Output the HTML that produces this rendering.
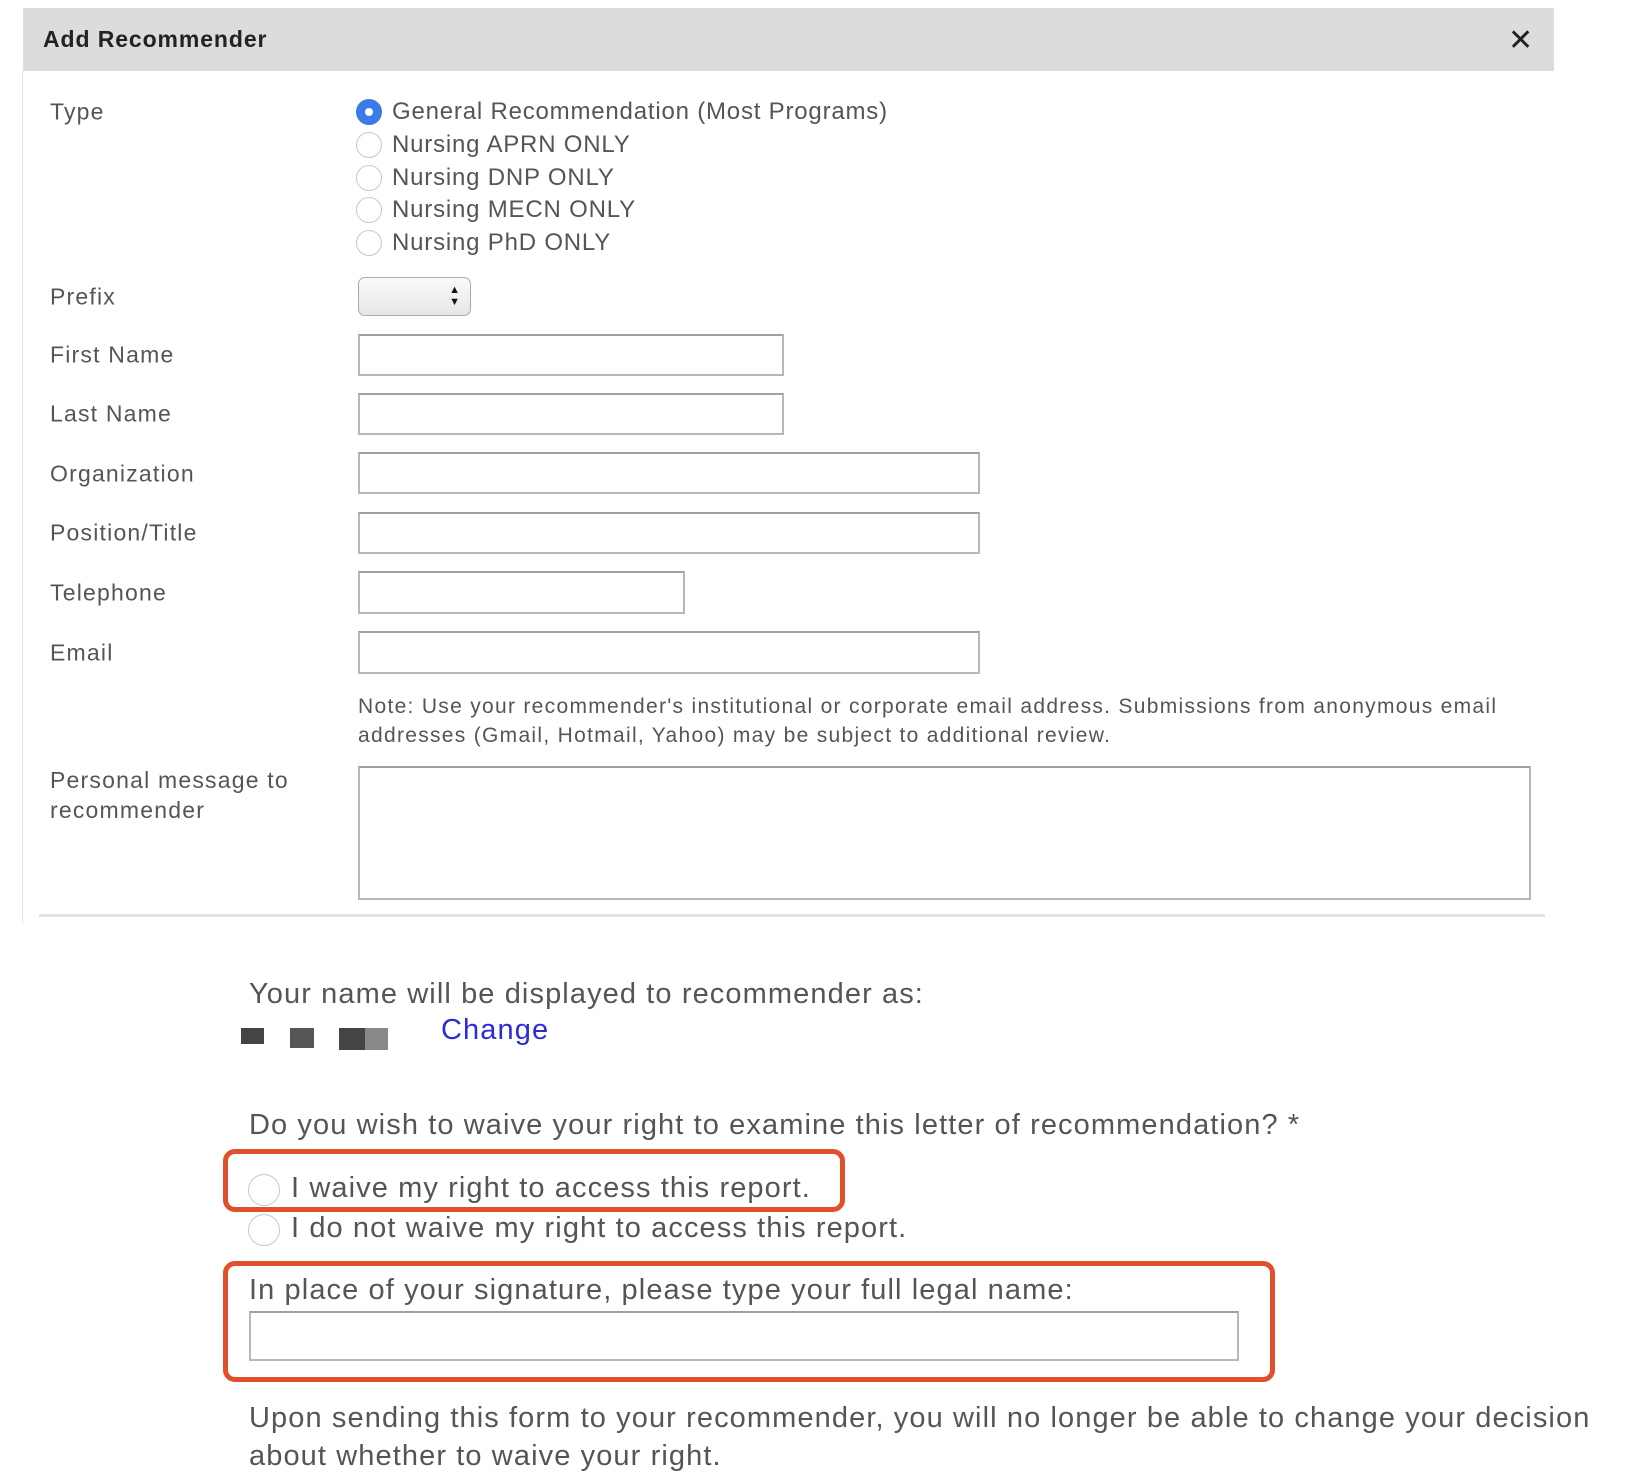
<!DOCTYPE html>
<html><head><meta charset="utf-8"><style>
body{margin:0;width:1648px;height:1482px;background:#fff;position:relative;overflow:hidden;font-family:"Liberation Sans",sans-serif;color:#555}
.a{position:absolute;white-space:nowrap}
.hdr{position:absolute;left:23px;top:8px;width:1531px;height:63px;background:#dcdcdc}
.lbl{position:absolute;left:50px;font-size:23px;letter-spacing:1.2px;transform:translateY(-50%)}
.rad{position:absolute;width:24px;height:24px;border:1px solid #c8c8c8;border-radius:50%;background:#fff;transform:translate(-50%,-50%)}
.rt{position:absolute;left:392px;font-size:24px;letter-spacing:0.8px;transform:translateY(-50%)}
.in{position:absolute;border:2px solid #b8b8b8;border-top-color:#a0a0a0;background:#fff;box-sizing:border-box}
.big{font-size:29px;letter-spacing:1.1px}
.box{position:absolute;border:5px solid #e0502a;border-radius:12px;box-sizing:border-box}
</style></head><body>
<div class="hdr"></div>
<div class="a" style="left:43px;top:26px;font-size:23px;font-weight:bold;color:#222;letter-spacing:0.9px">Add Recommender</div>
<div class="a" style="left:1508px;top:23px;font-size:30px;color:#222">✕</div>
<div class="a" style="left:22px;top:71px;width:1px;height:853px;background:#e4e4f0"></div>

<div class="lbl" style="top:112px">Type</div>
<div class="rad" style="left:369px;top:112px;background:#3a7be8;border-color:#3a7be8"><div style="position:absolute;left:8px;top:8px;width:8px;height:8px;border-radius:50%;background:#fff"></div></div>
<div class="rt" style="top:112px">General Recommendation (Most Programs)</div>
<div class="rad" style="left:369px;top:145px"></div><div class="rt" style="top:145px">Nursing APRN ONLY</div>
<div class="rad" style="left:369px;top:178px"></div><div class="rt" style="top:178px">Nursing DNP ONLY</div>
<div class="rad" style="left:369px;top:210px"></div><div class="rt" style="top:210px">Nursing MECN ONLY</div>
<div class="rad" style="left:369px;top:243px"></div><div class="rt" style="top:243px">Nursing PhD ONLY</div>

<div class="lbl" style="top:297px">Prefix</div>
<div class="a" style="left:358px;top:277px;width:113px;height:39px;border:1px solid #aaa;border-radius:7px;box-sizing:border-box;background:linear-gradient(#fafafa,#e6e6e6)"><div style="position:absolute;right:10px;top:6px;font-size:11px;line-height:12px;color:#111">▲<br>▼</div></div>
<div class="lbl" style="top:355px">First Name</div><div class="in" style="left:358px;top:334px;width:426px;height:42px"></div>
<div class="lbl" style="top:414px">Last Name</div><div class="in" style="left:358px;top:393px;width:426px;height:42px"></div>
<div class="lbl" style="top:474px">Organization</div><div class="in" style="left:358px;top:452px;width:622px;height:42px"></div>
<div class="lbl" style="top:533px">Position/Title</div><div class="in" style="left:358px;top:512px;width:622px;height:42px"></div>
<div class="lbl" style="top:593px">Telephone</div><div class="in" style="left:358px;top:571px;width:327px;height:43px"></div>
<div class="lbl" style="top:653px">Email</div><div class="in" style="left:358px;top:631px;width:622px;height:43px"></div>
<div class="a" style="left:358px;top:692px;font-size:21px;line-height:29px;letter-spacing:1.3px">Note: Use your recommender's institutional or corporate email address. Submissions from anonymous email<br>addresses (Gmail, Hotmail, Yahoo) may be subject to additional review.</div>
<div class="a" style="left:50px;top:765px;font-size:23px;line-height:30px;letter-spacing:1.2px">Personal message to<br>recommender</div>
<div class="in" style="left:358px;top:766px;width:1173px;height:134px"></div>
<div class="a" style="left:39px;top:914px;width:1506px;height:3px;background:#e2e2e2"></div>

<div class="a big" style="left:249px;top:978px">Your name will be displayed to recommender as:</div>
<div class="a" style="left:241px;top:1028px;width:23px;height:16px;background:#444"></div>
<div class="a" style="left:290px;top:1028px;width:24px;height:20px;background:#555"></div>
<div class="a" style="left:339px;top:1028px;width:26px;height:22px;background:#444"></div>
<div class="a" style="left:365px;top:1028px;width:23px;height:22px;background:#888"></div>
<div class="a big" style="left:441px;top:1014px;color:#2b2bd8">Change</div>

<div class="a big" style="left:249px;top:1109px">Do you wish to waive your right to examine this letter of recommendation? *</div>
<div class="box" style="left:223px;top:1149px;width:622px;height:63px"></div>
<div class="rad" style="left:264px;top:1190px;width:30px;height:30px"></div>
<div class="a big" style="left:291px;top:1172px">I waive my right to access this report.</div>
<div class="rad" style="left:264px;top:1230px;width:30px;height:30px"></div>
<div class="a big" style="left:291px;top:1212px">I do not waive my right to access this report.</div>
<div class="box" style="left:223px;top:1261px;width:1052px;height:121px"></div>
<div class="a big" style="left:249px;top:1274px">In place of your signature, please type your full legal name:</div>
<div class="in" style="left:249px;top:1311px;width:990px;height:50px"></div>
<div class="a big" style="left:249px;top:1399px;line-height:38px">Upon sending this form to your recommender, you will no longer be able to change your decision<br>about whether to waive your right.</div>
</body></html>
